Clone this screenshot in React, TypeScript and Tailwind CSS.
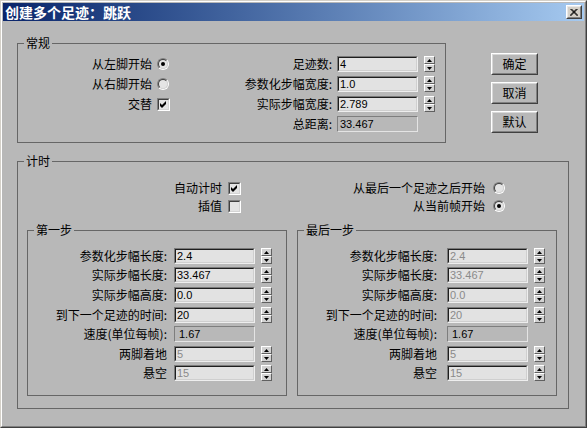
import React from "react";

function Radio({ checked }: { checked?: boolean }) {
  return (
    <div className="w-[12px] h-[12px] rounded-full border border-t-[#808080] border-l-[#808080] border-b-white border-r-white">
      <div className="w-full h-full rounded-full border border-t-[#404040] border-l-[#404040] border-b-[#d4d4d4] border-r-[#d4d4d4] bg-[#e4e4e4] flex items-center justify-center">
        {checked ? <div className="w-[4px] h-[4px] rounded-full bg-black" /> : null}
      </div>
    </div>
  );
}

function Check({ checked }: { checked?: boolean }) {
  return (
    <div className="w-[13px] h-[13px] border border-t-[#808080] border-l-[#808080] border-b-white border-r-white">
      <div className="w-full h-full border border-t-[#404040] border-l-[#404040] border-b-[#d4d4d4] border-r-[#d4d4d4] bg-[#e4e4e4] flex items-center justify-center">
        {checked ? (
          <svg width="7" height="7" viewBox="0 0 7 7" className="block">
            <polygon points="0,2 2,4 6,0 6,3 2,7 0,5" fill="#000" />
          </svg>
        ) : null}
      </div>
    </div>
  );
}

function Field({ value, disabled }: { value: string; disabled?: boolean }) {
  return (
    <div className="w-[81px] h-[16px] border border-t-[#7a7a7a] border-l-[#7a7a7a] border-b-[#eeeeee] border-r-[#eeeeee]">
      <div
        className={`h-full border border-t-[#1e1e1e] border-l-[#1e1e1e] border-b-[#cfcfcf] border-r-[#cfcfcf] bg-[#e2e2e2] pl-px flex items-center font-['Liberation_Sans',sans-serif] text-[11px] leading-none ${
          disabled ? "text-[#8a8a8a]" : "text-black"
        }`}
      >
        {value}
      </div>
    </div>
  );
}

function ReadField({ value, pad }: { value: string; pad: string }) {
  return (
    <div
      className={`w-[81px] h-[16px] border border-t-[#7e7e7e] border-l-[#7e7e7e] border-b-[#e4e4e4] border-r-[#e4e4e4] flex items-center font-['Liberation_Sans',sans-serif] text-[11px] leading-none text-black ${pad}`}
    >
      {value}
    </div>
  );
}

function Spinner() {
  return (
    <div className="w-[11px] h-[16px] flex flex-col">
      <div className="h-[8px] border border-t-white border-l-white border-b-[#606060] border-r-[#606060] bg-[#d2d2d2] flex items-center justify-center">
        <svg width="5" height="3" viewBox="0 0 5 3" className="block">
          <polygon points="2.5,0 5,3 0,3" fill="#000" />
        </svg>
      </div>
      <div className="h-[8px] border border-t-white border-l-white border-b-[#606060] border-r-[#606060] bg-[#d2d2d2] flex items-center justify-center">
        <svg width="5" height="3" viewBox="0 0 5 3" className="block">
          <polygon points="0,0 5,0 2.5,3" fill="#000" />
        </svg>
      </div>
    </div>
  );
}

function Btn({ children }: { children: React.ReactNode }) {
  return (
    <button
      type="button"
      className="w-[47px] h-[22px] border border-t-white border-l-white border-b-[#404040] border-r-[#404040] p-0"
    >
      <div className="h-full border border-t-[#d8d8d8] border-l-[#d8d8d8] border-b-[#808080] border-r-[#808080] flex items-center justify-center">
        {children}
      </div>
    </button>
  );
}

function Group({
  label,
  className,
  children,
}: {
  label: string;
  className: string;
  children?: React.ReactNode;
}) {
  return (
    <div className={`border border-[#666666] ${className}`}>
      <div className="-mt-[8px] -mb-[6px] ml-[6px] w-fit px-[2px] h-[14px] bg-[#b8b8b8] leading-[14px]">
        {label}
      </div>
      {children}
    </div>
  );
}

type StepRow = {
  label: string;
  value: string;
  kind: "field" | "read";
  disabled?: boolean;
  mt: string;
};

function StepGroup({
  label,
  rows,
  gap,
}: {
  label: string;
  rows: StepRow[];
  gap: string;
}) {
  return (
    <Group label={label} className="w-[260px] h-[166px]">
      <div className="flex flex-col">
        {rows.map((r, i) => (
          <div key={i} className={`flex h-[16px] items-center ${r.mt}`}>
            <div className="w-[139px] text-right whitespace-nowrap">{r.label}</div>
            <div className={gap}>
              {r.kind === "field" ? (
                <Field value={r.value} disabled={r.disabled} />
              ) : (
                <ReadField value={r.value} pad="pl-[4px]" />
              )}
            </div>
            {r.kind === "field" ? (
              <div className="ml-[6px]">
                <Spinner />
              </div>
            ) : null}
          </div>
        ))}
      </div>
    </Group>
  );
}

const mts = ["mt-[17px]", "mt-[3px]", "mt-[4px]", "mt-[4px]", "mt-[3px]", "mt-[4px]", "mt-[3px]"];

export default function App() {
  const firstRows: StepRow[] = [
    { label: "参数化步幅长度:", value: "2.4", kind: "field", mt: mts[0] },
    { label: "实际步幅长度:", value: "33.467", kind: "field", mt: mts[1] },
    { label: "实际步幅高度:", value: "0.0", kind: "field", mt: mts[2] },
    { label: "到下一个足迹的时间:", value: "20", kind: "field", mt: mts[3] },
    { label: "速度(单位每帧):", value: "1.67", kind: "read", mt: mts[4] },
    { label: "两脚着地", value: "5", kind: "field", disabled: true, mt: mts[5] },
    { label: "悬空", value: "15", kind: "field", disabled: true, mt: mts[6] },
  ];
  const lastRows: StepRow[] = [
    { label: "参数化步幅长度:", value: "2.4", kind: "field", disabled: true, mt: mts[0] },
    { label: "实际步幅长度:", value: "33.467", kind: "field", disabled: true, mt: mts[1] },
    { label: "实际步幅高度:", value: "0.0", kind: "field", disabled: true, mt: mts[2] },
    { label: "到下一个足迹的时间:", value: "20", kind: "field", disabled: true, mt: mts[3] },
    { label: "速度(单位每帧):", value: "1.67", kind: "read", mt: mts[4] },
    { label: "两脚着地", value: "5", kind: "field", disabled: true, mt: mts[5] },
    { label: "悬空", value: "15", kind: "field", disabled: true, mt: mts[6] },
  ];

  return (
    <div className="w-[587px] h-[428px] border border-t-[#d4d0c8] border-l-[#d4d0c8] border-b-[#404040] border-r-[#404040] font-['Noto_Sans_CJK_SC',sans-serif] text-[12px] leading-[14px] text-black">
      <div className="h-full border border-t-white border-l-white border-b-[#808080] border-r-[#808080] bg-[#b8b8b8] p-px flex flex-col">
        {/* Title bar */}
        <div className="h-[18px] flex items-center pl-[2px] pr-[2px] bg-linear-to-r from-[#0a246a] to-[#a6caf0]">
          <span className="text-white font-bold text-[14px] leading-[16px] whitespace-nowrap">
            创建多个足迹：跳跃
          </span>
          <button
            type="button"
            className="ml-auto w-[16px] h-[14px] border border-t-white border-l-white border-b-[#404040] border-r-[#404040] bg-[#d4d0c8] p-0"
          >
            <div className="h-full border border-t-[#e8e8e8] border-l-[#e8e8e8] border-b-[#808080] border-r-[#808080] flex items-center justify-center">
              <svg width="8" height="7" viewBox="0 0 8 7" className="block">
                <path d="M0.5 0 L7.5 7 M1.5 0 L8 6.5 M7.5 0 L0.5 7 M6.5 0 L0 6.5" stroke="#000" strokeWidth="1" />
              </svg>
            </div>
          </button>
        </div>

        {/* Top section */}
        <div className="flex mt-[22px] ml-[14px]">
          <Group label="常规" className="w-[429px] h-[100px]">
            <div className="flex flex-col pt-[10px]">
              <div className="flex h-[20px] items-center">
                <div className="w-[134px] text-right">从左脚开始</div>
                <div className="ml-[5px] w-[13px]">
                  <Radio checked />
                </div>
                <div className="w-[162px] text-right">足迹数:</div>
                <div className="ml-[5px]">
                  <Field value="4" />
                </div>
                <div className="ml-[6px]">
                  <Spinner />
                </div>
              </div>
              <div className="flex h-[20px] items-center">
                <div className="w-[134px] text-right">从右脚开始</div>
                <div className="ml-[5px] w-[13px]">
                  <Radio />
                </div>
                <div className="w-[162px] text-right">参数化步幅宽度:</div>
                <div className="ml-[5px]">
                  <Field value="1.0" />
                </div>
                <div className="ml-[6px]">
                  <Spinner />
                </div>
              </div>
              <div className="flex h-[20px] items-center">
                <div className="w-[134px] text-right">交替</div>
                <div className="ml-[5px] w-[13px]">
                  <Check checked />
                </div>
                <div className="w-[162px] text-right">实际步幅宽度:</div>
                <div className="ml-[5px]">
                  <Field value="2.789" />
                </div>
                <div className="ml-[6px]">
                  <Spinner />
                </div>
              </div>
              <div className="flex h-[20px] items-center">
                <div className="w-[134px]" />
                <div className="ml-[5px] w-[13px]" />
                <div className="w-[162px] text-right">总距离:</div>
                <div className="ml-[5px]">
                  <ReadField value="33.467" pad="pl-[2px]" />
                </div>
              </div>
            </div>
          </Group>
          <div className="ml-[45px] mt-[10px] flex flex-col gap-[7px]">
            <Btn>确定</Btn>
            <Btn>取消</Btn>
            <Btn>默认</Btn>
          </div>
        </div>

        {/* Timing */}
        <div className="mt-[18px] ml-[14px]">
          <Group label="计时" className="w-[552px] h-[248px]">
            <div className="flex flex-col pt-[17px]">
              <div className="flex h-[18px] items-center">
                <div className="w-[204px] text-right">自动计时</div>
                <div className="ml-[6px]">
                  <Check checked />
                </div>
                <div className="w-[244px] text-right">从最后一个足迹之后开始</div>
                <div className="ml-[8px]">
                  <Radio />
                </div>
              </div>
              <div className="flex h-[18px] items-center">
                <div className="w-[204px] text-right">插值</div>
                <div className="ml-[6px]">
                  <Check />
                </div>
                <div className="w-[244px] text-right">从当前帧开始</div>
                <div className="ml-[8px]">
                  <Radio checked />
                </div>
              </div>
            </div>
            <div className="mt-[15px] ml-[9px] flex gap-[10px]">
              <StepGroup label="第一步" rows={firstRows} gap="ml-[7px]" />
              <StepGroup label="最后一步" rows={lastRows} gap="ml-[10px]" />
            </div>
          </Group>
        </div>
      </div>
    </div>
  );
}
